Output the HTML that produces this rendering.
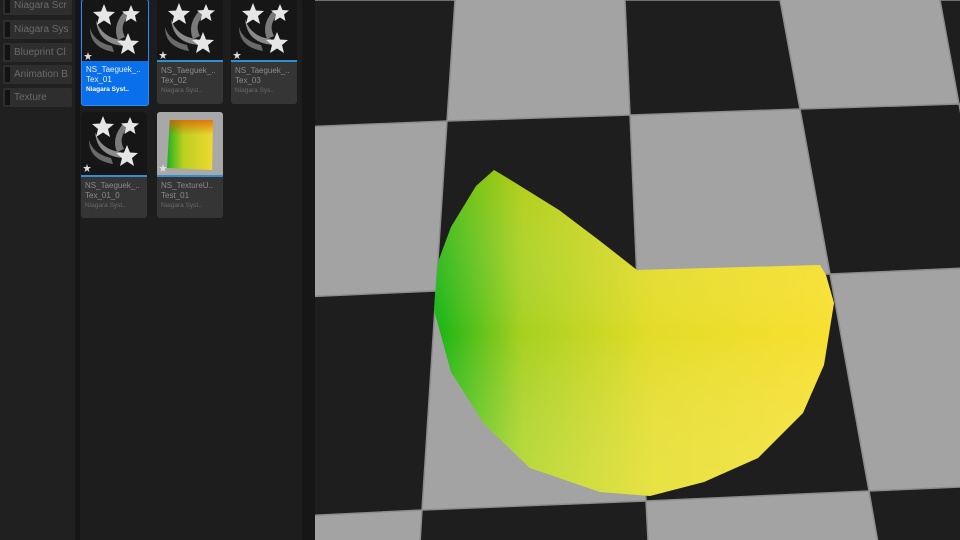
<!DOCTYPE html>
<html><head><style>
body{margin:0;width:960px;height:540px;overflow:hidden;background:#1c1c1c;font-family:"Liberation Sans",sans-serif;position:relative}
.lp{position:absolute;left:0;top:0;width:75px;height:540px;background:#202020}
.sep{position:absolute;left:75px;top:0;width:5px;height:540px;background:#151515}
.btn{position:absolute;left:3px;width:69px;height:19px;background:#2e2e2e;border-radius:2px;color:#6a6a6a;font-size:10px;line-height:19px}
.btn i{position:absolute;left:2px;top:2px;width:5px;height:15px;background:#121212}
.btn span{position:absolute;left:11px;white-space:nowrap;overflow:hidden;width:57px}
.area{position:absolute;left:80px;top:0;width:222px;height:540px;background:#1d1d1d}
.rs{position:absolute;left:302px;top:0;width:13px;height:540px;background:#161616}
.tile{position:absolute;width:66px;border-radius:3px;overflow:hidden;background:#353535}
.thumb{height:61px;background:#161616;position:relative}
.bar{height:2px;background:#2f8fd0}
.lab{height:40px;padding:4px 0 0 4px;box-sizing:border-box;font-size:8px;line-height:10px;color:#8a8a8a}
.lab small{display:block;font-size:6.5px;color:#6a6a6a;line-height:9px}
.sel{background:#0a6fea;border:1px solid #2a8aff}
.sel .lab{color:#e8f0ff}.sel .lab small{color:#fff;font-weight:bold}
svg.v{position:absolute;left:315px;top:0}
</style></head><body>
<div class="lp">
<div class="btn" style="top:-4px"><i></i><span>Niagara Scr</span></div>
<div class="btn" style="top:20px"><i></i><span>Niagara Sys</span></div>
<div class="btn" style="top:43px"><i></i><span>Blueprint Cl</span></div>
<div class="btn" style="top:65px"><i></i><span>Animation B</span></div>
<div class="btn" style="top:88px"><i></i><span>Texture</span></div>
</div>
<div class="sep"></div>
<div class="area"></div>
<div class="rs"></div>
<svg width="0" height="0" style="position:absolute"><defs>
<g id="st">
<path d="M8 28 Q12 42 30 46 L32 52 Q8 48 8 28Z" fill="#6a6a6a"/>
<path d="M14 20 Q20 38 40 40 L42 46 Q16 44 14 20Z" fill="#8a8a8a"/>
<path d="M42 12 Q30 26 36 40 L43 37 Q37 26 46 17Z" fill="#7a7a7a"/>
<polygon points="22,4 25,11.5 33,12 27,17 29,25 22,20.5 15,25 17,17 11,12 19,11.5" fill="#e6e6e6"/>
<polygon points="49,5 51.5,11 58,11.5 53,15.5 54.5,22 49,18.5 43.5,22 45,15.5 40,11.5 46.5,11" fill="#e6e6e6"/>
<polygon points="46,33 49,40.5 57,41 51,46 53,54 46,49.5 39,54 41,46 35,41 43,40.5" fill="#e6e6e6"/>
<polygon points="6,52 7,55 10,55 7.6,57 8.5,60 6,58.3 3.5,60 4.4,57 2,55 5,55" fill="#ddd"/>
</g></defs></svg>
<div class="tile sel" style="left:81px;top:-1px;height:105px"><div class="thumb"><svg width="66" height="61"><use href="#st"/></svg></div><div class="lab">NS_Taeguek_..<br>Tex_01<small>Niagara Syst..</small></div></div>
<div class="tile" style="left:157px;top:-1px;height:105px"><div class="thumb"><svg width="66" height="61"><use href="#st"/></svg></div><div class="bar"></div><div class="lab">NS_Taeguek_..<br>Tex_02<small>Niagara Syst..</small></div></div>
<div class="tile" style="left:231px;top:-1px;height:105px"><div class="thumb"><svg width="66" height="61"><use href="#st"/></svg></div><div class="bar"></div><div class="lab">NS_Taeguek_..<br>Tex_03<small>Niagara Sys..</small></div></div>
<div class="tile" style="left:81px;top:112px;height:106px"><div class="thumb" style="height:63px"><svg width="66" height="63"><use href="#st"/></svg></div><div class="bar"></div><div class="lab">NS_Taeguek_..<br>Tex_01_0<small>Niagara Syst..</small></div></div>
<div class="tile" style="left:157px;top:112px;height:106px"><div class="thumb" style="height:63px;background:#a8a8a8"><div style="position:absolute;left:10px;top:8px;width:46px;height:50px;background:linear-gradient(90deg,#20b020,#b8d020 35%,#f0d830);clip-path:polygon(6% 0,100% 0,98% 100%,0 96%)"></div><div style="position:absolute;left:10px;top:8px;width:46px;height:50px;background:linear-gradient(180deg,rgba(220,80,0,.7),rgba(230,150,0,0) 30%);clip-path:polygon(6% 0,100% 0,98% 100%,0 96%)"></div><svg width="66" height="63" style="position:absolute;left:0;top:0"><polygon points="6,52 7,55 10,55 7.6,57 8.5,60 6,58.3 3.5,60 4.4,57 2,55 5,55" fill="#ddd"/></svg></div><div class="bar"></div><div class="lab">NS_TextureU..<br>Test_01<small>Niagara Syst..</small></div></div>
<svg class="v" width="645" height="540" viewBox="315 0 645 540">
<defs><linearGradient id="g" x1="434" y1="0" x2="834" y2="0" gradientUnits="userSpaceOnUse"><stop offset="0" stop-color="#14b414"/><stop offset=".22" stop-color="#a6d020"/><stop offset=".55" stop-color="#e4dc28"/><stop offset="1" stop-color="#f8e030"/></linearGradient>
<linearGradient id="g2" x1="0" y1="170" x2="0" y2="496" gradientUnits="userSpaceOnUse"><stop offset="0" stop-color="#d8c800" stop-opacity=".3"/><stop offset=".5" stop-color="#fff" stop-opacity="0"/><stop offset="1" stop-color="#f0f080" stop-opacity=".3"/></linearGradient></defs>
<rect x="300" y="0" width="700" height="560" fill="#a3a3a3"/>
<g fill="#1e1e1e" stroke="#8c8c8c" stroke-width="1.5">
<polygon points="300,0 455,0 447,121 300,127"/>
<polygon points="625,0 780,0 800,109 630,115"/>
<polygon points="940,0 1100,0 1100,100 959,104"/>
<polygon points="447,121 630,115 637,282 436,291"/>
<polygon points="800,109 959,104 990,267 830,274"/>
<polygon points="300,297 436,291 422,510 300,516"/>
<polygon points="637,282 830,274 869,491 646,501"/>
<polygon points="990,267 1100,264 1100,480 1030,484"/>
<polygon points="422,510 646,501 649,560 419,560"/>
<polygon points="869,491 1030,484 1044,560 881,560"/>
</g>
<polygon points="494,170 509,179 559,210 600,241 637,270 820,265 826,275 834,303 824,365 803,413 758,458 704,482 650,496 600,492 530,468 484,424 451,372 434,310 438,262 451,227 476,186" fill="url(#g)"/>
<polygon points="494,170 509,179 559,210 600,241 637,270 820,265 826,275 834,303 824,365 803,413 758,458 704,482 650,496 600,492 530,468 484,424 451,372 434,310 438,262 451,227 476,186" fill="url(#g2)"/>
</svg>
</body></html>
